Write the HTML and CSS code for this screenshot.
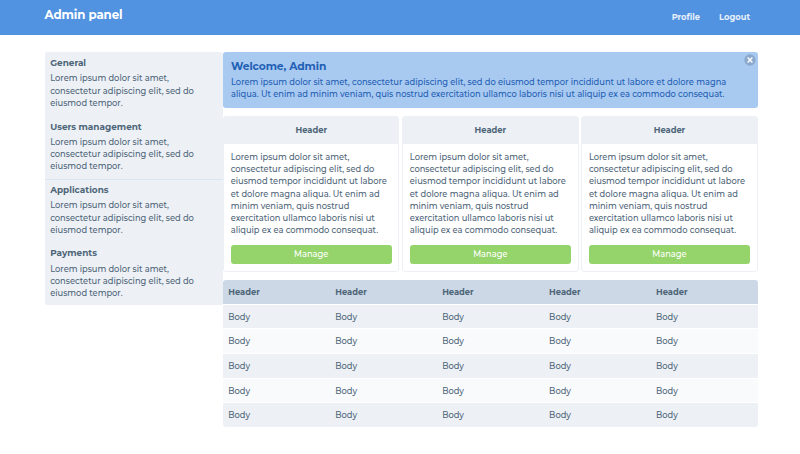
FILE: index.html
```html
<!DOCTYPE html>
<html lang="en">
<head>
<meta charset="utf-8">
<title>Admin panel</title>
<link rel="stylesheet" href="styles.css">
</head>
<body>
<header class="topbar">
  <h1 class="brand">Admin panel</h1>
  <nav class="links"><a>Profile</a><a>Logout</a></nav>
</header>
<div class="layout">
  <aside class="sidebar">
    <section class="item"><h2>General</h2><p>Lorem ipsum dolor sit amet,<br>consectetur adipiscing elit, sed do<br>eiusmod tempor.</p></section>
    <section class="item"><h2>Users management</h2><p>Lorem ipsum dolor sit amet,<br>consectetur adipiscing elit, sed do<br>eiusmod tempor.</p></section>
    <section class="item ruled"><h2>Applications</h2><p>Lorem ipsum dolor sit amet,<br>consectetur adipiscing elit, sed do<br>eiusmod tempor.</p></section>
    <section class="item"><h2>Payments</h2><p>Lorem ipsum dolor sit amet,<br>consectetur adipiscing elit, sed do<br>eiusmod tempor.</p></section>
  </aside>
  <main class="main">
    <section class="alert">
      <h2>Welcome, Admin</h2>
      <p>Lorem ipsum dolor sit amet, consectetur adipiscing elit, sed do eiusmod tempor incididunt ut labore et dolore magna<br>aliqua. Ut enim ad minim veniam, quis nostrud exercitation ullamco laboris nisi ut aliquip ex ea commodo consequat.</p>
      <svg class="close" viewBox="0 0 12 12"><circle cx="6" cy="6" r="5.7"/><path d="M3.6 3.6l4.8 4.8M8.4 3.6l-4.8 4.8"/></svg>
    </section>
    <div class="cards">
      <article class="card"><h3>Header</h3><div class="content"><p>Lorem ipsum dolor sit amet,<br>consectetur adipiscing elit, sed do<br>eiusmod tempor incididunt ut labore<br>et dolore magna aliqua. Ut enim ad<br>minim veniam, quis nostrud<br>exercitation ullamco laboris nisi ut<br>aliquip ex ea commodo consequat.</p><button>Manage</button></div></article>
      <article class="card"><h3>Header</h3><div class="content"><p>Lorem ipsum dolor sit amet,<br>consectetur adipiscing elit, sed do<br>eiusmod tempor incididunt ut labore<br>et dolore magna aliqua. Ut enim ad<br>minim veniam, quis nostrud<br>exercitation ullamco laboris nisi ut<br>aliquip ex ea commodo consequat.</p><button>Manage</button></div></article>
      <article class="card"><h3>Header</h3><div class="content"><p>Lorem ipsum dolor sit amet,<br>consectetur adipiscing elit, sed do<br>eiusmod tempor incididunt ut labore<br>et dolore magna aliqua. Ut enim ad<br>minim veniam, quis nostrud<br>exercitation ullamco laboris nisi ut<br>aliquip ex ea commodo consequat.</p><button>Manage</button></div></article>
    </div>
    <div class="table">
      <div class="row head"><span>Header</span><span>Header</span><span>Header</span><span>Header</span><span>Header</span></div>
      <div class="row"><span>Body</span><span>Body</span><span>Body</span><span>Body</span><span>Body</span></div>
      <div class="row"><span>Body</span><span>Body</span><span>Body</span><span>Body</span><span>Body</span></div>
      <div class="row"><span>Body</span><span>Body</span><span>Body</span><span>Body</span><span>Body</span></div>
      <div class="row"><span>Body</span><span>Body</span><span>Body</span><span>Body</span><span>Body</span></div>
      <div class="row"><span>Body</span><span>Body</span><span>Body</span><span>Body</span><span>Body</span></div>
    </div>
  </main>
</div>
</body>
</html>
```
FILE: styles.css
```css
* { box-sizing: border-box; margin: 0; }
body {
  background: #fff;
  color: #4f6679;
  font: 500 8.3px/12.25px Montserrat, Inter, sans-serif;
  white-space: nowrap;
}
.topbar {
  height: 35px;
  padding: 0 50px 0 44.5px;
  background: #5192e1;
  color: #fff;
  display: flex;
  justify-content: space-between;
}
.brand { font-size: 11.8px; font-weight: 700; line-height: 30px; letter-spacing: -0.1px; }
.links { display: flex; gap: 19px; font-weight: 700; line-height: 34px; color: #e6effb; }
.layout { display: flex; align-items: flex-start; padding: 17px 42.3px 0 44.7px; }
.sidebar { flex: none; width: 178.3px; height: 253px; background: #edf1f6; border-radius: 2px; }
.item { height: 63.4px; padding: 4.2px 5.5px; border-top: 1px solid transparent; }
.item.ruled { border-color: #dbe5f1; }
.item h2 { font-size: 8.9px; font-weight: 700; line-height: 11px; margin-bottom: 4.3px; }
.main { flex: 1; min-width: 0; }
.alert {
  position: relative;
  height: 56px;
  padding: 7.5px 8px;
  background: #a8c9f0;
  color: #1f60b4;
  border-radius: 3px;
}
.alert h2 { font-size: 10.7px; font-weight: 700; line-height: 14px; margin-bottom: 2px; letter-spacing: -0.07px; }
.close { position: absolute; top: 2px; right: 2px; width: 12px; height: 12px; }
.close circle { fill: #8aa9cd; }
.close path { fill: none; stroke: #fff; stroke-width: 1.4; }
.cards { display: grid; grid-template-columns: repeat(3, 1fr); gap: 2.6px; margin-top: 8.3px; }
.card { height: 155.4px; border: 1px solid #edf1f6; border-radius: 3px; }
.card h3 { height: 26.5px; background: #edf1f6; font-size: 8.3px; font-weight: 700; line-height: 26px; text-align: center; }
.content { padding: 7px 6.7px; }
.card button {
  display: block;
  width: 100%;
  height: 19px;
  margin-top: 8.3px;
  padding: 0;
  border: 0;
  border-radius: 3px;
  background: #95d46a;
  color: #fff;
  font: inherit;
}
.table { margin-top: 8.5px; display: grid; gap: 1px; border-radius: 3px; overflow: hidden; }
.row { height: 23.6px; display: grid; grid-template-columns: repeat(5, 1fr); line-height: 25px; background: #edf1f6; }
.row span { padding-left: 5.3px; }
.row:nth-child(odd) { background: #f9fafc; }
.row.head { background: #ccd8e6; font-weight: 700; line-height: 24px; }
```
